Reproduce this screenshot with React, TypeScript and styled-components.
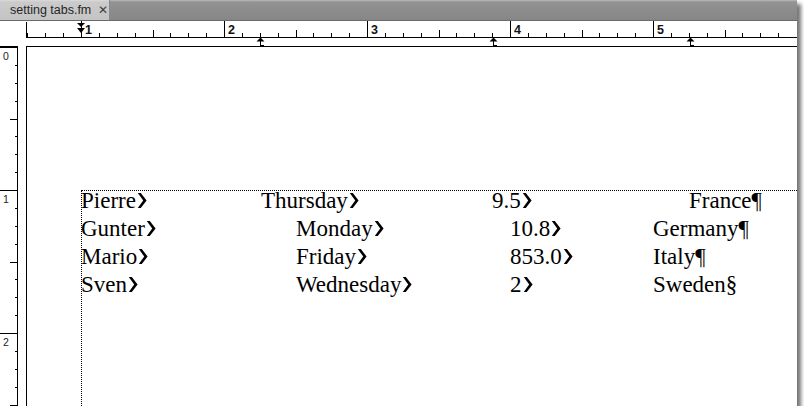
import React from 'react';
import styled, { createGlobalStyle } from 'styled-components';

const INCH = 143;
const EIGHTH = INCH / 8;

const GlobalStyle = createGlobalStyle`
  html, body {
    margin: 0;
    padding: 0;
    background: #fff;
  }
  body {
    font-family: "Liberation Sans", Arial, sans-serif;
  }
`;

const Window = styled.div`
  width: 797px;
  height: 406px;
  display: flex;
  flex-direction: column;
  background: #fff;
  box-shadow: 4px 4px 4px rgba(0, 0, 0, 0.55);
  overflow: hidden;
`;

const TabBar = styled.div`
  height: 20px;
  flex: none;
  display: flex;
  background: linear-gradient(#b9b9b9 0, #929292 2px, #868686 100%);
  border-bottom: 1px solid #6a6a6a;
`;

const Tab = styled.div`
  width: 110px;
  box-sizing: border-box;
  display: flex;
  align-items: center;
  padding-left: 10px;
  background: linear-gradient(#dadada 0, #cbcbcb 2px, #c4c4c4 100%);
  border-right: 1px solid #8a8a8a;
  font-size: 12.5px;
  color: #262626;
`;

const Close = styled.span`
  margin-left: 7px;
  font-size: 12px;
  color: #404040;
`;

const RulerRow = styled.div`
  height: 25px;
  flex: none;
  display: grid;
  grid-template-columns: 26px 1fr;
`;

const Corner = styled.div`
  background: #fff;
`;

const Body = styled.div`
  flex: 1;
  min-height: 0;
  display: grid;
  grid-template-columns: 26px 1fr;
`;

const Page = styled.div`
  border-top: 1px solid #000;
  border-left: 1px solid #000;
  padding: 143px 0 0 54px;
  display: flex;
  flex-direction: column;
  overflow: hidden;
`;

const TextFrame = styled.div`
  flex: 1;
  border-top: 1px dotted #000;
  border-left: 1px dotted #000;
`;

const Lines = styled.div`
  margin: -4px 0 0 -1px;
  font-family: "Liberation Serif", "Times New Roman", serif;
  font-size: 23px;
  line-height: 28px;
  color: #000;
`;

// text starts at page x = 81; stops are page x positions of each tab column
const Line = styled.div<{ $stops: number[] }>`
  display: grid;
  grid-template-columns: ${({ $stops }) =>
    `${$stops[0] - 81}px ${$stops[1] - $stops[0]}px ${$stops[2] - $stops[1]}px auto`};
  white-space: nowrap;
`;

const Cell = styled.span``;

const TabGlyph = styled.svg`
  display: inline-block;
  width: 10px;
  height: 15px;
  margin-left: 1px;
  vertical-align: baseline;
`;

function TabMark() {
  return (
    <TabGlyph viewBox="0 0 10 15">
      <polygon points="0.8,0 3.8,0 9.6,7.5 3.8,15 0.8,15 6.2,7.5" fill="#000" />
    </TabGlyph>
  );
}

const rows = [
  { cells: ['Pierre', 'Thursday', '9.5', 'France'], stops: [261, 492, 689], end: '¶' },
  { cells: ['Gunter', 'Monday', '10.8', 'Germany'], stops: [296, 510, 653], end: '¶' },
  { cells: ['Mario', 'Friday', '853.0', 'Italy'], stops: [296, 510, 653], end: '¶' },
  { cells: ['Sven', 'Wednesday', '2', 'Sweden'], stops: [296, 510, 653], end: '§' },
];

// tab stops of the paragraph holding the cursor, in ruler coordinates
const tabStops = [234, 467, 664];

function TopRuler() {
  const ticks = [];
  for (let k = -3; k < 42; k++) {
    const x = 55 + k * EIGHTH;
    if (x < 1 || x > 766) continue;
    const px = Math.round(x) + 0.5;
    if (k % 8 === 0) {
      ticks.push(<line key={k} x1={px} y1={0} x2={px} y2={16} stroke="#000" />);
      ticks.push(
        <text key={'n' + k} x={px + 3.5} y={12.5} fontSize={12.5} fontWeight="bold"
          fontFamily='"Liberation Sans", Arial, sans-serif' fill="#111">
          {1 + k / 8}
        </text>
      );
    } else if (k % 4 === 0) {
      ticks.push(<line key={k} x1={px} y1={9} x2={px} y2={16} stroke="#000" />);
    } else {
      ticks.push(<line key={k} x1={px} y1={12} x2={px} y2={16} stroke="#000" />);
    }
  }
  return (
    <svg width="771" height="25" style={{ display: 'block' }}>
      <rect width="771" height="25" fill="#fff" />
      <line x1={0.5} y1={1} x2={0.5} y2={16} stroke="#000" />
      <line x1={0} y1={16.5} x2={771} y2={16.5} stroke="#000" />
      {ticks}
      <polygon points="51,2 59,2 55,6" fill="#000" />
      <polygon points="51,7 59,7 55,12" fill="#000" />
      {tabStops.map((x) => (
        <g key={x}>
          <polygon points={`${x - 3.5},20.5 ${x + 0.5},16.5 ${x + 4.5},20.5`} fill="#000" />
          <line x1={x + 0.5} y1={20} x2={x + 0.5} y2={24} stroke="#000" />
          <line x1={x} y1={24.5} x2={x + 4} y2={24.5} stroke="#000" />
        </g>
      ))}
    </svg>
  );
}

function LeftRuler() {
  const ticks = [];
  for (let k = 0; k < 21; k++) {
    const y = 1 + k * EIGHTH;
    const py = Math.round(y) + 0.5;
    if (k % 8 === 0) {
      ticks.push(<line key={k} x1={0} y1={py} x2={17} y2={py} stroke="#000" />);
      ticks.push(
        <text key={'n' + k} x={3} y={py + 12} fontSize={10.5}
          fontFamily='"Liberation Sans", Arial, sans-serif' fill="#222">
          {k / 8}
        </text>
      );
    } else if (k % 4 === 0) {
      ticks.push(<line key={k} x1={10} y1={py} x2={17} y2={py} stroke="#000" />);
    } else {
      ticks.push(<line key={k} x1={15} y1={py} x2={17} y2={py} stroke="#000" />);
    }
  }
  return (
    <svg width="26" height="360" style={{ display: 'block' }}>
      <rect width="26" height="360" fill="#fff" />
      <rect x={0} y={0} width={17} height={2} fill="#000" />
      <line x1={17.5} y1={0} x2={17.5} y2={360} stroke="#000" />
      {ticks}
    </svg>
  );
}

export default function App() {
  return (
    <>
      <GlobalStyle />
      <Window>
        <TabBar>
          <Tab>
            setting tabs.fm
            <Close>✕</Close>
          </Tab>
        </TabBar>
        <RulerRow>
          <Corner />
          <TopRuler />
        </RulerRow>
        <Body>
          <LeftRuler />
          <Page>
            <TextFrame>
              <Lines>
                {rows.map((row) => (
                  <Line key={row.cells[0]} $stops={row.stops}>
                    {row.cells.map((c, i) => (
                      <Cell key={c}>
                        {c}
                        {i < 3 ? <TabMark /> : row.end}
                      </Cell>
                    ))}
                  </Line>
                ))}
              </Lines>
            </TextFrame>
          </Page>
        </Body>
      </Window>
    </>
  );
}
